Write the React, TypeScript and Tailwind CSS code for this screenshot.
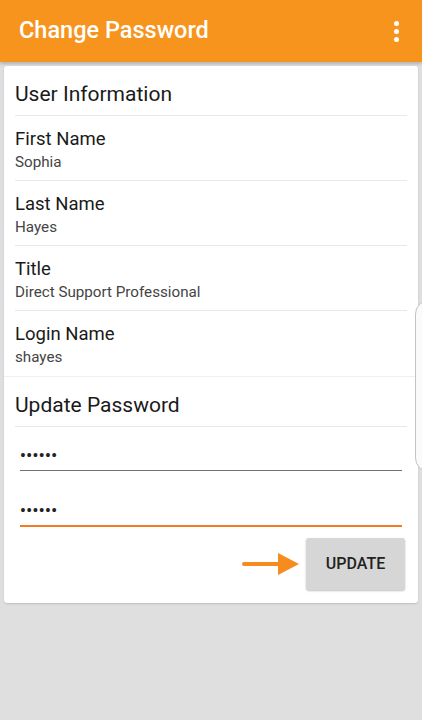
const rows = [
  { label: "First Name", value: "Sophia" },
  { label: "Last Name", value: "Hayes" },
  { label: "Title", value: "Direct Support Professional" },
  { label: "Login Name", value: "shayes" },
];

function Dots() {
  return (
    <div className="flex flex-col items-center gap-[3px]">
      <span className="block h-[5px] w-[5px] rounded-full bg-white" />
      <span className="block h-[5px] w-[5px] rounded-full bg-white" />
      <span className="block h-[5px] w-[5px] rounded-full bg-white" />
    </div>
  );
}

function Arrow() {
  return (
    <svg width="58" height="22" viewBox="0 0 58 22" className="mr-[6px]">
      <line x1="2" y1="11" x2="40" y2="11" stroke="#f68b1f" strokeWidth="4" strokeLinecap="round" />
      <polygon points="36,0 57,11 36,22" fill="#f68b1f" />
    </svg>
  );
}

export default function App() {
  return (
    <div
      className="relative min-h-[720px] w-full overflow-hidden bg-[#dfdfdf]"
      style={{ fontFamily: "Roboto, 'Noto Sans', sans-serif" }}
    >
      <header className="flex h-[62px] items-center justify-between bg-[#f7941e] pl-[19px] pr-[23px] shadow-[0_2px_3px_rgba(0,0,0,0.2)]">
        <h1 className="text-[23.5px] font-medium text-white">Change Password</h1>
        <Dots />
      </header>

      <div className="mx-[4px] mt-[4px] rounded-[3px] bg-white shadow-[0_1px_2px_rgba(0,0,0,0.15)]">
        <div className="px-[11px]">
          <div className="flex h-[50px] items-center border-b border-[#e8e8e8] pt-[8px] text-[21px] text-[#1a1a1a]">
            User Information
          </div>
          {rows.map((row, i) => (
            <div
              key={row.label}
              className={`flex h-[65px] flex-col pt-[12px] ${
                i < rows.length - 1 ? "border-b border-[#e8e8e8]" : ""
              }`}
            >
              <div className="text-[18.5px] leading-[22px] text-[#1a1a1a]">{row.label}</div>
              <div className="text-[15.2px] leading-[24px] text-[#444]">{row.value}</div>
            </div>
          ))}
        </div>

        <div className="border-t border-[#f0f0f0] px-[11px] pb-[13px]">
          <div className="flex h-[50px] items-center border-b border-[#e8e8e8] pt-[8px] text-[21px] text-[#1a1a1a]">
            Update Password
          </div>
          <div className="mx-[5px] mt-[19px] flex h-[25px] items-end border-b-[1.5px] border-[#707070] pb-[6px]">
            <span className="text-[16px] font-bold leading-none tracking-[0.5px] text-[#222]">••••••</span>
          </div>
          <div className="mx-[5px] mt-[30px] flex h-[26px] items-end border-b-2 border-[#f47b20] pb-[6px]">
            <span className="text-[16px] font-bold leading-none tracking-[0.5px] text-[#222]">••••••</span>
          </div>
          <div className="mt-[11px] flex items-center justify-end">
            <Arrow />
            <button className="mr-[2px] h-[52px] w-[99px] rounded-[3px] bg-[#d6d6d6] text-[16px] font-medium text-[#222] shadow-[0_1px_2px_rgba(0,0,0,0.25)]">
              UPDATE
            </button>
          </div>
        </div>
      </div>

      <div className="absolute left-[415px] top-[300px] h-[172px] w-[20px] rounded-l-[14px] border border-[#c4c4c4] bg-[#fafafa]" />
    </div>
  );
}
